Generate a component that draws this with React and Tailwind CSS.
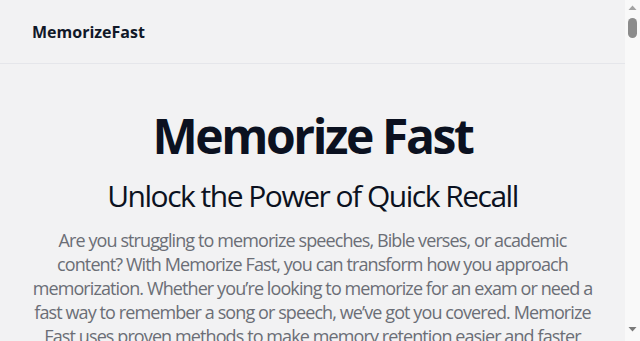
function ScrollBar() {
  return (
    <div className="w-[15px] shrink-0 h-screen bg-[#f9f9f9] flex flex-col items-center">
      <svg width="15" height="15" viewBox="0 0 15 15" className="shrink-0">
        <path d="M3.5 10 L7.5 5.5 L11.5 10 Z" fill="#a3a3a3" />
      </svg>
      <div className="mt-[3px] w-[9px] h-[20px] rounded-full bg-[#8c8c8c]" />
      <div className="flex-1" />
      <svg width="15" height="15" viewBox="0 0 15 15" className="shrink-0 mb-[4px]">
        <path d="M3.5 5 L7.5 9.5 L11.5 5 Z" fill="#7a7a7a" />
      </svg>
    </div>
  );
}

export default function App() {
  return (
    <div className="h-screen overflow-hidden flex bg-[#f2f2f3]" style={{ fontFamily: '"Open Sans", sans-serif' }}>
      <div className="flex-1 min-w-0">
        <header className="h-16 flex items-center px-8 border-b border-[#e5e6ea]">
          <span className="text-base font-bold text-gray-900">MemorizeFast</span>
        </header>
        <main className="px-8 pt-12 pb-24 flex flex-col items-center text-center">
          <h1 className="text-5xl font-bold text-[#0b1120] tracking-tighter">Memorize Fast</h1>
          <h2 className="mt-[18px] text-3xl text-[#0b1120] tracking-tighter">Unlock the Power of Quick Recall</h2>
          <p className="mt-[14px] max-w-xl text-lg leading-6 tracking-tighter text-[#6b6e76]">
            Are you struggling to memorize speeches, Bible verses, or academic content? With Memorize Fast, you can
            transform how you approach memorization. Whether you’re looking to memorize for an exam or need a fast way
            to remember a song or speech, we’ve got you covered. Memorize Fast uses proven methods to make memory
            retention easier and faster than ever before.
          </p>
        </main>
      </div>
      <ScrollBar />
    </div>
  );
}
